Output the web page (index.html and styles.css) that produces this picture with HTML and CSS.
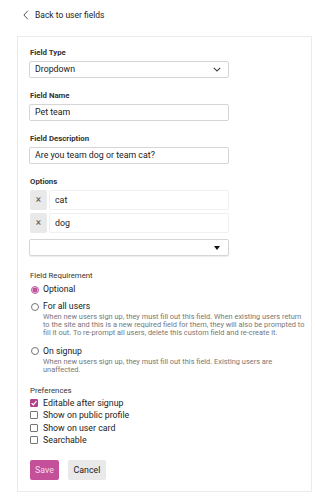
FILE: index.html
```html
<!DOCTYPE html>
<html>
<head>
<meta charset="utf-8">
<link rel="stylesheet" href="styles.css">
</head>
<body>
<div class="back">
  <svg class="back-icon" width="6" height="10" viewBox="0 0 6 10"><path d="M4.8 0.8 L0.9 5 L4.8 9.2" fill="none" stroke="#555" stroke-width="1"/></svg>
  <span>Back to user fields</span>
</div>
<div class="card">
  <div class="field">
    <div class="label">Field Type</div>
    <div class="control select">
      <span>Dropdown</span>
      <svg class="chev" width="8" height="5" viewBox="0 0 8 5"><path d="M0.8 0.8 L4 4 L7.2 0.8" fill="none" stroke="#444" stroke-width="1.1"/></svg>
    </div>
  </div>
  <div class="field">
    <div class="label">Field Name</div>
    <div class="control">Pet team</div>
  </div>
  <div class="field">
    <div class="label">Field Description</div>
    <div class="control">Are you team dog or team cat?</div>
  </div>
  <div class="field options">
    <div class="label">Options</div>
    <div class="opt-row"><span class="opt-x">×</span><span class="opt-input">cat</span></div>
    <div class="opt-row"><span class="opt-x">×</span><span class="opt-input">dog</span></div>
    <div class="control select opt-select">
      <span></span>
      <svg class="tri" width="6" height="4" viewBox="0 0 6 4"><path d="M0 0 L6 0 L3 4 Z" fill="#111"/></svg>
    </div>
  </div>
  <div class="section">
    <div class="sec-label">Field Requirement</div>
    <div class="radio-item">
      <span class="radio checked"></span><span class="radio-text">Optional</span>
    </div>
    <div class="radio-item">
      <span class="radio"></span><span class="radio-text">For all users</span>
    </div>
    <div class="desc">When new users sign up, they must fill out this field. When existing users return to the site and this is a new required field for them, they will also be prompted to fill it out. To re-prompt all users, delete this custom field and re-create it.</div>
    <div class="radio-item">
      <span class="radio"></span><span class="radio-text">On signup</span>
    </div>
    <div class="desc">When new users sign up, they must fill out this field. Existing users are unaffected.</div>
  </div>
  <div class="section prefs">
    <div class="sec-label">Preferences</div>
    <div class="check-item"><span class="check checked"><svg width="8" height="8" viewBox="0 0 8 8"><path d="M1.6 4.2 L3.3 5.9 L6.5 2.1" fill="none" stroke="#fff" stroke-width="1.2"/></svg></span><span>Editable after signup</span></div>
    <div class="check-item"><span class="check"></span><span>Show on public profile</span></div>
    <div class="check-item"><span class="check"></span><span>Show on user card</span></div>
    <div class="check-item"><span class="check"></span><span>Searchable</span></div>
  </div>
  <div class="buttons">
    <span class="btn btn-primary">Save</span>
    <span class="btn btn-default">Cancel</span>
  </div>
</div>
</body>
</html>
```

FILE: styles.css
```css
body {
  margin: 0;
  background: #fff;
  font-family: Roboto, "Noto Sans", sans-serif;
  color: #222;
}
.back {
  display: flex;
  align-items: center;
  height: 12px;
  margin-top: 9px;
  padding-left: 23px;
  font-size: 8.5px;
  line-height: 12px;
  color: #222;
}
.back-icon {
  margin-right: 6px;
}
.card {
  margin: 15px 0 0 17px;
  width: 295px;
  box-sizing: border-box;
  border: 1px solid #ebebeb;
  padding: 11px 4px 11px 11px;
}
.field {
  margin-bottom: 13px;
}
.field.options {
  margin-bottom: 15px;
}
.label {
  font-size: 7.8px;
  font-weight: bold;
  line-height: 9px;
  color: #333;
  margin-bottom: 4px;
  padding-left: 1px;
}
.control {
  width: 200px;
  height: 17px;
  box-sizing: border-box;
  border: 1px solid #d5d5d5;
  border-radius: 2px;
  padding: 0 6px 0 5px;
  font-size: 8.8px;
  line-height: 15px;
  color: #222;
  display: flex;
  align-items: center;
  justify-content: space-between;
}
.chev {
  margin-right: 1px;
}
.opt-row {
  display: flex;
  width: 200px;
  height: 20px;
  margin-bottom: 3px;
  padding-left: 1px;
  box-sizing: border-box;
}
.opt-x {
  width: 17px;
  height: 20px;
  background: #e9e9e9;
  border-radius: 2px;
  color: #555;
  font-size: 10px;
  line-height: 20px;
  text-align: center;
}
.opt-input {
  flex: 1;
  margin-left: 2px;
  border: 1px solid #f0f0f0;
  border-radius: 2px;
  font-size: 8.8px;
  line-height: 18px;
  padding-left: 5px;
}
.opt-select {
  margin-top: 6px;
  box-shadow: 0 1px 1px rgba(0,0,0,0.08);
}
.tri {
  margin-right: 2px;
}
.sec-label {
  font-size: 7.8px;
  line-height: 9px;
  color: #333;
  padding-left: 1px;
}
.radio-item {
  display: flex;
  align-items: center;
  height: 11px;
  margin-top: 4px;
  font-size: 8.7px;
  line-height: 11px;
}
.radio-item + .radio-item {
  margin-top: 6px;
}
.desc + .radio-item {
  margin-top: 8px;
}
.radio {
  width: 8px;
  height: 8px;
  box-sizing: border-box;
  border: 1px solid #777;
  border-radius: 50%;
  margin: 0 4px 0 2px;
  flex: none;
}
.radio.checked {
  border-color: #c2549d;
  background: radial-gradient(circle, #c2549d 0 2.4px, #f3d6e8 2.6px);
}
.desc {
  font-size: 7.4px;
  line-height: 8.2px;
  color: #777;
  margin-left: 14px;
  margin-top: 1px;
}
.prefs {
  margin-top: 12px;
}
.prefs .sec-label {
  margin-bottom: 2px;
}
.check-item {
  display: flex;
  align-items: center;
  height: 12.3px;
  font-size: 8.8px;
  color: #222;
}
.check {
  width: 8px;
  height: 8px;
  box-sizing: border-box;
  border: 1px solid #777;
  border-radius: 1px;
  margin: 0 5px 0 1px;
  flex: none;
  display: flex;
}
.check.checked {
  background: #b3418a;
  border-color: #b3418a;
}
.check.checked svg {
  margin: -1px;
}
.buttons {
  display: flex;
  gap: 9px;
  margin-top: 14px;
  padding-left: 1px;
}
.btn {
  height: 20px;
  line-height: 20px;
  font-size: 8.8px;
  border-radius: 2px;
  text-align: center;
}
.btn-primary {
  width: 29px;
  background: #c4509a;
  color: #f6dcec;
}
.btn-default {
  width: 38px;
  background: #e9e9e9;
  color: #222;
}
```
